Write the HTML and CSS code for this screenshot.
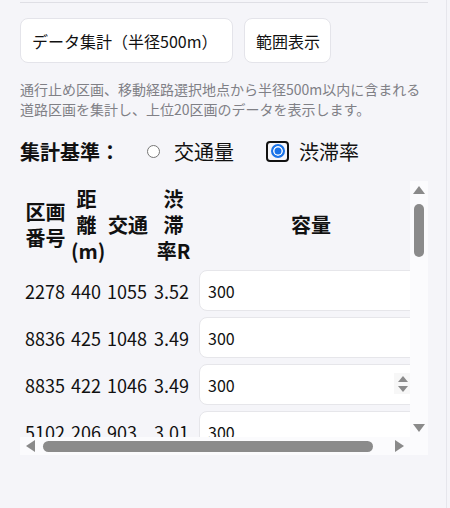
FILE: index.html
```html
<!DOCTYPE html>
<html lang="ja">
<head>
<meta charset="utf-8">
<title>集計</title>
<link rel="stylesheet" href="styles.css">
</head>
<body>
<div class="page">
  <div class="rule"></div>
  <div class="btnrow">
    <button class="btn btn-agg">データ集計（半径500m）</button>
    <button class="btn btn-range">範囲表示</button>
  </div>
  <p class="caption">通行止め区画、移動経路選択地点から半径500m以内に含まれる道路区画を集計し、上位20区画のデータを表示します。</p>
  <div class="criteria">
    <span class="crit-label">集計基準：</span>
    <label class="opt opt-first"><span class="radio"></span><span class="opt-text">交通量</span></label>
    <label class="opt opt-second"><span class="focus"><span class="radio on"></span></span><span class="opt-text">渋滞率</span></label>
  </div>
  <div class="tablebox">
    <div class="viewport">
      <table class="grid">
        <colgroup>
          <col class="w1"><col class="w2"><col class="w3"><col class="w4"><col class="w5">
        </colgroup>
        <thead>
          <tr><th>区画番号</th><th>距離(m)</th><th>交通</th><th>渋滞率R</th><th>容量</th></tr>
        </thead>
        <tbody>
          <tr><td>2278</td><td>440</td><td>1055</td><td>3.52</td><td><div class="inwrap"><input class="num" type="text" value="300"></div></td></tr>
          <tr><td>8836</td><td>425</td><td>1048</td><td>3.49</td><td><div class="inwrap"><input class="num" type="text" value="300"></div></td></tr>
          <tr><td>8835</td><td>422</td><td>1046</td><td>3.49</td><td><div class="inwrap"><input class="num" type="text" value="300"><span class="spin"><span class="tri up"></span><span class="tri down"></span></span></div></td></tr>
          <tr><td>5102</td><td>206</td><td>903</td><td>3.01</td><td><div class="inwrap"><input class="num" type="text" value="300"></div></td></tr>
        </tbody>
      </table>
    </div>
    <div class="vbar">
      <span class="sbtn"><span class="tri up big"></span></span>
      <span class="vthumb"></span>
      <span class="sfill"></span>
      <span class="sbtn"><span class="tri down big"></span></span>
    </div>
    <div class="hbar">
      <span class="hbtn"><span class="tri left"></span></span>
      <span class="hthumb"></span>
      <span class="sfill"></span>
      <span class="hbtn"><span class="tri right"></span></span>
    </div>
    <div class="corner"></div>
  </div>
</div>
</body>
</html>
```

FILE: styles.css
```css
html, body {
  margin: 0;
  padding: 0;
  background: #f5f5f9;
}
body {
  font-family: "Noto Sans CJK JP", "Noto Sans", sans-serif;
  color: #111;
}
.page {
  width: 447px;
  min-height: 508px;
  box-sizing: border-box;
  border-right: 1px solid #e6e6ec;
  padding: 2px 0 0 20px;
}
.rule {
  width: 408px;
  height: 1px;
  background: #dfdfe5;
}
.btnrow {
  display: flex;
  gap: 11px;
  margin-top: 15px;
}
.btn {
  height: 45px;
  padding: 0 0 0 1px;
  background: #fff;
  border: 1px solid #e4e4ea;
  border-radius: 8px;
  font-family: "Noto Sans CJK JP", sans-serif;
  font-size: 16px;
  color: #111;
  text-align: left;
  padding-left: 11px;
}
.btn-agg {
  width: 213px;
}
.btn-range {
  width: 87px;
}
.caption {
  margin: 16px 0 0;
  width: 410px;
  font-size: 14px;
  line-height: 20px;
  color: #808086;
}
.criteria {
  display: flex;
  align-items: center;
  height: 26px;
  margin-top: 19px;
  font-size: 20px;
}
.crit-label {
  font-weight: bold;
}
.opt {
  display: flex;
  align-items: center;
}
.opt-first {
  margin-left: 27px;
}
.opt-first .opt-text {
  margin-left: 14px;
}
.opt-second {
  margin-left: 32px;
}
.opt-second .opt-text {
  margin-left: 10px;
}
.radio {
  display: block;
  width: 13px;
  height: 13px;
  box-sizing: border-box;
  border: 1px solid #767676;
  border-radius: 50%;
  background: #fff;
}
.radio.on {
  width: 14px;
  height: 14px;
  border: 2px solid #1a73e8;
  background: #1a73e8;
  box-shadow: inset 0 0 0 1.5px #fff;
}
.focus {
  display: block;
  padding: 1.5px 2.5px;
  border: 2px solid #111;
  border-radius: 4px;
}
.tablebox {
  display: grid;
  grid-template-columns: 390px 18px;
  grid-template-rows: 256px 18px;
  width: 408px;
  margin-top: 17px;
}
.viewport {
  overflow: hidden;
}
.grid {
  table-layout: fixed;
  width: 409px;
  border-collapse: separate;
  border-spacing: 5px 2px;
}
.w1 { width: 41px; }
.w2 { width: 31px; }
.w3 { width: 42px; }
.w4 { width: 39px; }
.w5 { width: 226px; }
.grid th {
  font-size: 20px;
  line-height: 26px;
  font-weight: bold;
  text-align: center;
  padding: 3px 0 2px;
  vertical-align: middle;
}
.grid td {
  font-size: 18px;
  padding: 2px 0;
  vertical-align: middle;
  white-space: nowrap;
}
.inwrap {
  position: relative;
}
.num {
  display: block;
  width: 100%;
  height: 41px;
  box-sizing: border-box;
  margin: 0 0 0 1px;
  padding: 0 8px;
  border: 1px solid #e6e6ea;
  border-radius: 8px;
  background: #fff;
  font-family: "Noto Sans CJK JP", sans-serif;
  font-size: 16px;
  color: #111;
}
.spin {
  position: absolute;
  left: 196px;
  top: 9px;
  width: 17px;
  height: 21px;
  background: #f7f7f7;
  display: flex;
  flex-direction: column;
  align-items: center;
  justify-content: center;
  gap: 4px;
}
.tri {
  display: block;
  width: 0;
  height: 0;
}
.tri.up {
  border-left: 5.5px solid transparent;
  border-right: 5.5px solid transparent;
  border-bottom: 6px solid #8a8a8a;
}
.tri.down {
  border-left: 5.5px solid transparent;
  border-right: 5.5px solid transparent;
  border-top: 6px solid #8a8a8a;
}
.tri.big.up {
  border-left-width: 6.5px;
  border-right-width: 6.5px;
  border-bottom-width: 8px;
}
.tri.big.down {
  border-left-width: 6.5px;
  border-right-width: 6.5px;
  border-top-width: 8px;
}
.tri.left {
  border-top: 6px solid transparent;
  border-bottom: 6px solid transparent;
  border-right: 9px solid #8a8a8a;
}
.tri.right {
  border-top: 6px solid transparent;
  border-bottom: 6px solid transparent;
  border-left: 9px solid #8a8a8a;
}
.vbar {
  background: #fbfbfd;
  display: flex;
  flex-direction: column;
  align-items: center;
}
.sbtn {
  height: 18px;
  width: 18px;
  display: flex;
  align-items: center;
  justify-content: center;
}
.vthumb {
  width: 10px;
  height: 53px;
  margin-top: 5px;
  border-radius: 5px;
  background: #8b8b8b;
}
.sfill {
  flex: 1;
}
.hbar {
  background: #fbfbfd;
  display: flex;
  align-items: center;
}
.hbtn {
  width: 21px;
  height: 18px;
  display: flex;
  align-items: center;
  justify-content: center;
}
.hthumb {
  width: 330px;
  height: 11px;
  margin-left: 2px;
  border-radius: 6px;
  background: #8b8b8b;
}
.corner {
  background: #fbfbfd;
}
```
